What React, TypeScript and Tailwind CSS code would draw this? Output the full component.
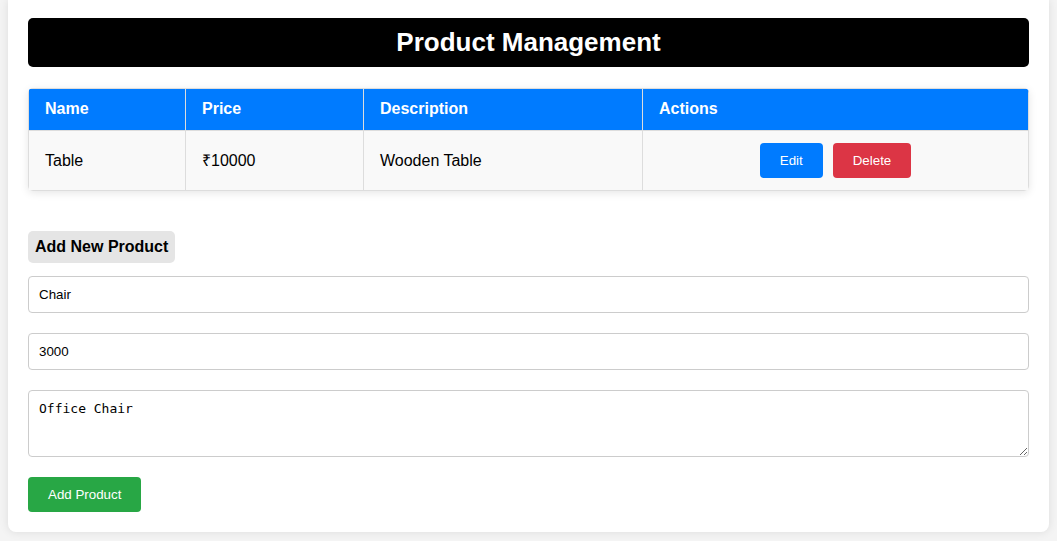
import { useState } from "react";

type Product = { name: string; price: number; description: string };

export default function App() {
  const [products] = useState<Product[]>([
    { name: "Table", price: 10000, description: "Wooden Table" },
  ]);

  return (
    <div className="min-h-[541px] bg-[#f4f4f4] px-2 font-['Liberation_Sans',Arial,sans-serif] text-black">
      <div className="rounded-b-lg bg-white px-5 pt-[18px] pb-5 shadow-[0_0_10px_rgba(0,0,0,0.1)]">
        <h1 className="rounded-[5px] bg-black py-[10px] text-center text-[26px] leading-[29px] font-bold text-white">
          Product Management
        </h1>

        <div className="mt-[21px] overflow-hidden rounded-[5px] shadow-[0_2px_8px_rgba(0,0,0,0.1)]">
          <table className="w-full border-collapse text-base">
            <thead>
              <tr className="bg-[#007bff] text-left text-white">
                <th className="h-[42px] w-[157px] border border-[#ddd] px-4 pb-[2px] font-bold">Name</th>
                <th className="w-[178px] border border-[#ddd] px-4 pb-[2px] font-bold">Price</th>
                <th className="w-[279px] border border-[#ddd] px-4 pb-[2px] font-bold">Description</th>
                <th className="border border-[#ddd] px-4 pb-[2px] font-bold">Actions</th>
              </tr>
            </thead>
            <tbody>
              {products.map((p) => (
                <tr key={p.name} className="bg-[#f9f9f9]">
                  <td className="h-[60px] border border-[#ddd] px-4">{p.name}</td>
                  <td className="border border-[#ddd] px-4">₹{p.price}</td>
                  <td className="border border-[#ddd] px-4">{p.description}</td>
                  <td className="border border-[#ddd] px-4">
                    <div className="flex justify-center gap-[10px]">
                      <button className="h-[35px] rounded-[4px] bg-[#007bff] px-5 text-[13.33px] text-white">Edit</button>
                      <button className="h-[35px] rounded-[4px] bg-[#dc3545] px-5 text-[13.33px] text-white">Delete</button>
                    </div>
                  </td>
                </tr>
              ))}
            </tbody>
          </table>
        </div>

        <div className="mt-[40px]">
          <h2 className="inline-block h-8 rounded-[5px] bg-[#e5e5e5] px-[7px] text-base leading-8 font-bold">
            Add New Product
          </h2>
          <div className="mt-[13px] flex flex-col gap-5">
            <input
              defaultValue="Chair"
              className="h-[37px] w-full rounded-[4px] border border-[#ccc] px-[10px] text-[13.33px] outline-none"
            />
            <input
              defaultValue="3000"
              className="h-[37px] w-full rounded-[4px] border border-[#ccc] px-[10px] text-[13.33px] outline-none"
            />
            <textarea
              defaultValue="Office Chair"
              className="block h-[67px] w-full rounded-[4px] border border-[#ccc] px-[10px] py-[10px] font-['DejaVu_Sans_Mono',monospace] text-[13px] leading-[15px] outline-none"
            />
          </div>
          <button className="mt-5 h-[35px] rounded-[4px] bg-[#28a745] px-5 text-[13.33px] text-white">
            Add Product
          </button>
        </div>
      </div>
    </div>
  );
}
